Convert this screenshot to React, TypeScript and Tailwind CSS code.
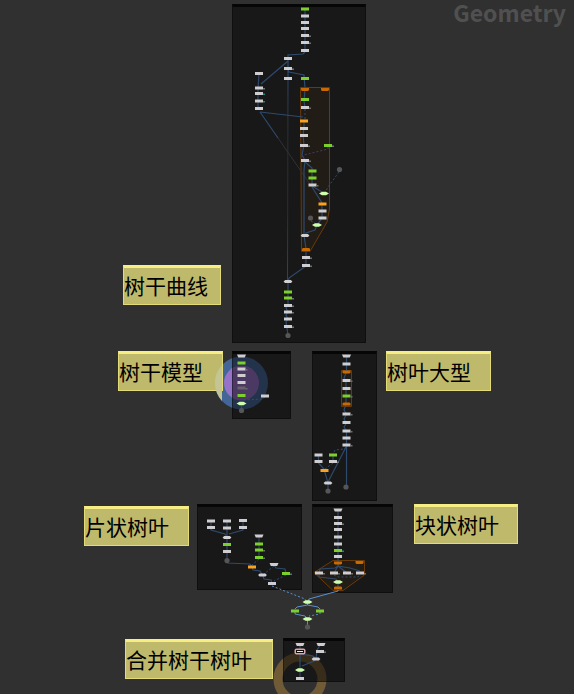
type NodeKind =
  | "white" | "green" | "orange" | "trap" | "round" | "merge" | "block" | "blockEnd" | "dot" | "dim" | "picked";
type Flag = "grey" | "teal";
type GraphNode = [kind: NodeKind, x: number, y: number, flag?: Flag];

const nodes: GraphNode[] = [
  // trunk curve
  ["green", 305, 9], ["white", 305, 16], ["white", 305, 22.5], ["white", 305, 28.5],
  ["white", 305, 35.5, "grey"], ["white", 305, 42.5, "grey"], ["white", 305, 50.5],
  ["white", 288, 58.5], ["white", 288, 68.5, "grey"], ["white", 288, 78.5], ["green", 305, 78.5],
  ["white", 259, 73.5], ["white", 259, 88, "grey"], ["white", 259, 93.5, "teal"],
  ["white", 259, 101, "teal"], ["white", 259, 108.5],
  ["block", 305, 89.5], ["block", 325, 89.5], ["green", 305, 99.5], ["white", 305, 107.5, "grey"],
  ["orange", 304, 121], ["white", 304, 128.5], ["white", 304, 135.5], ["white", 304, 145.5, "grey"],
  ["green", 328, 145.5, "grey"], ["white", 305, 160.5, "grey"], ["green", 312.5, 171],
  ["green", 312.5, 178], ["white", 312.5, 185, "grey"], ["merge", 324, 193.5], ["dot", 339.5, 169.5],
  ["orange", 322.5, 204], ["white", 322.5, 211], ["white", 322.5, 218], ["merge", 317, 225],
  ["dot", 310.5, 218], ["round", 305, 235.5], ["blockEnd", 306, 249.5],
  ["white", 306, 257.5, "grey"], ["white", 306, 265.5, "grey"], ["round", 288, 281.5],
  ["green", 288, 292], ["green", 288, 298, "grey"], ["white", 288, 305.5, "grey"],
  ["white", 288, 312, "grey"], ["white", 288, 319], ["white", 288, 326.5, "grey"], ["dot", 288, 335.5],
  // trunk model
  ["trap", 241.5, 356], ["green", 241.5, 363], ["white", 241.5, 369, "grey"], ["white", 241.5, 375.5],
  ["white", 241.5, 382.5], ["dim", 241.5, 388, "grey"], ["green", 241.5, 395.5],
  ["merge", 241.5, 403.5], ["dot", 241.5, 410.5], ["white", 265, 396],
  // large leaf
  ["trap", 346.5, 356], ["white", 346.5, 364], ["block", 346.5, 372], ["white", 346.5, 380.5, "grey"],
  ["white", 346.5, 388.5], ["green", 346.5, 396, "grey"], ["blockEnd", 346.5, 404],
  ["white", 346.5, 414, "grey"], ["white", 346.5, 422.5], ["white", 346.5, 431, "grey"],
  ["white", 346.5, 438], ["white", 346.5, 445, "grey"], ["white", 318.5, 455], ["white", 318.5, 461.5],
  ["green", 333, 455], ["white", 333, 461.5, "grey"], ["orange", 324.5, 470.5],
  ["round", 328, 483], ["dot", 328, 491], ["dot", 346, 487],
  // flat leaf
  ["white", 211, 521], ["white", 211, 527.5], ["white", 227, 521], ["white", 227, 528],
  ["white", 243, 520.5], ["white", 243, 527.5], ["round", 227, 537.5], ["green", 227, 544.5],
  ["white", 227, 551.5], ["dot", 227, 560.5], ["trap", 259, 536], ["green", 259, 544],
  ["green", 259, 550, "grey"], ["green", 259, 557.5, "grey"], ["orange", 252, 567],
  ["round", 262.5, 575], ["trap", 274, 564.5], ["green", 286, 573.5, "grey"], ["white", 272, 583.5],
  // block leaf
  ["trap", 338, 510], ["white", 338, 517.5], ["white", 338, 523.5, "grey"], ["white", 338, 529.5],
  ["white", 338, 537], ["white", 338, 544], ["green", 338, 550.5, "teal"], ["white", 338, 556.5],
  ["block", 338, 563], ["block", 359.5, 562.5], ["white", 319, 573, "grey"], ["white", 334, 573, "grey"],
  ["white", 347, 573, "grey"], ["white", 360, 573, "grey"], ["merge", 338, 582], ["blockEnd", 338, 588],
  // join
  ["merge", 307.5, 602], ["green", 295, 611], ["green", 320, 611], ["merge", 307.5, 619], ["dot", 307.5, 627],
  // merge trunk and leaf
  ["trap", 300, 644.5], ["trap", 321, 644.5], ["picked", 300, 651.5], ["white", 320, 651.5, "grey"],
  ["round", 316, 659], ["merge", 300, 670], ["white", 300, 678.5],
];

const wires = [
  "M305 9V52L303 54L288 55V78", "M288 61L261 84", "M288 70L289 72L304 75L305 88",
  "M259 74L258 88V110", "M305 90L304 101L305 107", "M260 112L303 117",
  "M304 121V128L303 135L304 145L302 155L305 160", "M260 112L278 138",
  "M305 162L312 168V186L322 192", "M312 187L322 203V218L317 225L315 230L306 233L305 236",
  "M305 161L304 170V235L306 249V266L289 278L288 282V304L286 308L288 312L286 315L288 319L286 322L288 335",
  "M346.5 356V372L344 378L346 381V404L344 410L346.5 414L344 419L346.5 423L344 427L346.5 431V487",
  "M346 447L328 482", "M318.5 455V463L324 469L328 483V491", "M333 455V461",
  "M211 521V530L225 534L227 537", "M243 521V530L229 534", "M227 521V563L250 564L252 567L253 570L260 571L263 576L264 579L271 580L272 583",
  "M274 565L276 568L285 569L286 573", "M259 536V557",
  "M338 510V566L350 568L360 571", "M338 566L335 568L320 569L319 573M338 566L334 573M338 566L347 573",
  "M319 575V577L336 579L338 582V588",
  "M300 644V678", "M321 644L317 650L316 659L314 661L302 666",
  "M300 654L313 656L316 659", "M241.5 403V410",
];
const dashedWires = [
  "M339 172L328 187L325 193", "M346 447L344 449L335 450L333 454",
  "M333 463L325 469", "M274 566L264 574", "M286 575L274 581", "M259 559L252 565",
  "M265 397L263 399L243 400", "M334 575L338 577L358 577L360 574", "M311 221L315 223", "M305 109V120",
];

function Glyph({ node: [kind, x, y, flag] }: { node: GraphNode }) {
  const shape = () => {
    switch (kind) {
      case "dot":
        return <circle cx={x} cy={y} r="2.6" fill="#565656" />;
      case "merge":
        return <path d={`M${x - 5} ${y}L${x - 2} ${y - 1.8}H${x + 2}L${x + 5} ${y}L${x + 2} ${y + 1.8}H${x - 2}Z`} fill="#cdffad" />;
      case "trap":
        return <path d={`M${x - 4.5} ${y - 1.5}H${x + 4.5}L${x + 3.2} ${y + 1.5}H${x - 3.2}Z`} fill="#cfcccf" />;
      case "round":
        return <path d={`M${x - 2.8} ${y - 1.5}H${x + 2.8}L${x + 4.4} ${y}L${x + 3} ${y + 1.5}H${x - 3}L${x - 4.4} ${y}Z`} fill="#d2cfd2" />;
      case "block":
        return <path d={`M${x - 4} ${y - 1.5}H${x + 4}V${y + 0.5}L${x + 3} ${y + 1.6}H${x - 3}L${x - 4} ${y + 0.5}Z`} fill="#c86a00" />;
      case "blockEnd":
        return <path d={`M${x - 4} ${y + 1.5}V${y - 0.7}L${x - 3} ${y - 1.6}H${x + 3}L${x + 4} ${y - 0.7}V${y + 1.5}Z`} fill="#c86a00" />;
      case "picked":
        return (
          <>
            <rect x={x - 5.5} y={y - 3} width="11" height="6" rx="2" fill="#d9a5aa" />
            <rect x={x - 3.5} y={y - 1} width="7" height="2" fill="#f2eeee" stroke="#120c0c" />
          </>
        );
      default: {
        const fill = { white: "#d0cdd0", green: "#7bd02c", orange: "#fba11c", dim: "#696269" }[kind];
        return <rect x={x - 4} y={y - 1.5} width="8" height="3" fill={fill} />;
      }
    }
  };
  return (
    <g>
      {shape()}
      {flag && <rect x={x + 4} y={y} width="2" height="1.5" fill={flag === "teal" ? "#17857a" : "#687070"} />}
    </g>
  );
}

function Panel({ place }: { place: string }) {
  return <div className={`absolute border border-t-3 border-black/35 border-t-black/75 bg-black/50 ${place}`} />;
}

function Note({ place, text }: { place: string; text: string }) {
  return (
    <div
      className={`absolute flex h-10 items-center border border-t-3 border-[#e2db78] border-t-[#f6ee84] bg-[#bfb96b] pb-0.5 text-[21px] leading-8 whitespace-nowrap text-black ${place}`}
    >
      {text}
    </div>
  );
}

export default function App() {
  return (
    <main className="relative h-screen min-h-[694px] w-full overflow-hidden bg-[#303030] font-['Noto_Sans_CJK_SC',sans-serif]">
      <h1 className="absolute top-0 right-2 text-[23px] leading-6 font-bold text-[#505050]">Geometry</h1>

      <svg className="absolute top-0 left-0" width="574" height="694" aria-hidden="true">
        <circle cx="241.5" cy="383" r="26.5" fill="#446697" />
        <circle cx="241.5" cy="383" r="17.5" fill="#9673c8" />
        <circle cx="300" cy="679" r="22" fill="none" stroke="#715a36" strokeWidth="9" />
      </svg>

      <Panel place="left-[232px] top-[4px] h-[339px] w-[134px]" />
      <Panel place="left-[232px] top-[351px] h-[68px] w-[59px]" />
      <Panel place="left-[312px] top-[351px] h-[150px] w-[65px]" />
      <Panel place="left-[197px] top-[504px] h-[86px] w-[105px]" />
      <Panel place="left-[312px] top-[504px] h-[89px] w-[81px]" />
      <Panel place="left-[283px] top-[638px] h-[44px] w-[62px]" />

      <Note place="left-[123px] top-[265px] w-[98px]" text="树干曲线" />
      <Note place="left-[118px] top-[351px] w-[105px]" text="树干模型" />
      <Note place="left-[386px] top-[351px] w-[105px]" text="树叶大型" />
      <Note place="left-[84px] top-[506px] w-[105px]" text="片状树叶" />
      <Note place="left-[414px] top-[504px] w-[104px]" text="块状树叶" />
      <Note place="left-[125px] top-[639px] w-[148px]" text="合并树干树叶" />

      <svg className="absolute top-0 left-0" width="574" height="694" role="img" aria-label="Node graph">
        <defs>
          <linearGradient id="fade" gradientUnits="userSpaceOnUse" x1="0" y1="78" x2="0" y2="281">
            <stop offset="0" stopColor="#2b4669" />
            <stop offset="0.3" stopColor="#292d33" />
            <stop offset="0.65" stopColor="#292c31" />
            <stop offset="1" stopColor="#2b4669" />
          </linearGradient>
        </defs>
        <path d="M222 365A26.5 26.5 0 0 0 222 401Z" fill="#c3c694" />
        <g fill="#ff8c00" fillOpacity="0.045" stroke="#693a08">
          <path d="M300.5 87.5H329.5V209L327 222L310 251.5H301.5Z" />
          <path d="M341.5 370.5H351.5V406.5H341.5Z" />
          <path d="M333 560.5H364.5V575L343 590.5H333L314 572.5Z" />
        </g>
        <path d="M288 79L287.500 281" fill="none" stroke="url(#fade)" />
        <path d="M278 138L312 187" fill="none" stroke="#303237" />
        <g fill="none" stroke="#2e4a6e" strokeWidth="1.2">
          {wires.map((d) => <path key={d} d={d} />)}
        </g>
        <g fill="none" stroke="#314b70" strokeDasharray="2 2">
          {dashedWires.map((d) => <path key={d} d={d} />)}
        </g>
        <path d="M328 147V149L304 155L300 158" fill="none" stroke="#4a3a66" strokeDasharray="2 2" />
        <g fill="none" stroke="#5a8fd0">
          <path d="M272 586L305 599L307 602" strokeDasharray="2 2" />
          <path d="M338 590V591L309 599L307.500 602V605L297 607L295 609M307.500 605L318 607L320 609M295 612V614L305 616L307.500 619V625" />
          <path d="M320 612V614L309 616" strokeDasharray="2 2" />
        </g>
        {nodes.map((node, i) => <Glyph key={i} node={node} />)}
      </svg>
    </main>
  );
}
